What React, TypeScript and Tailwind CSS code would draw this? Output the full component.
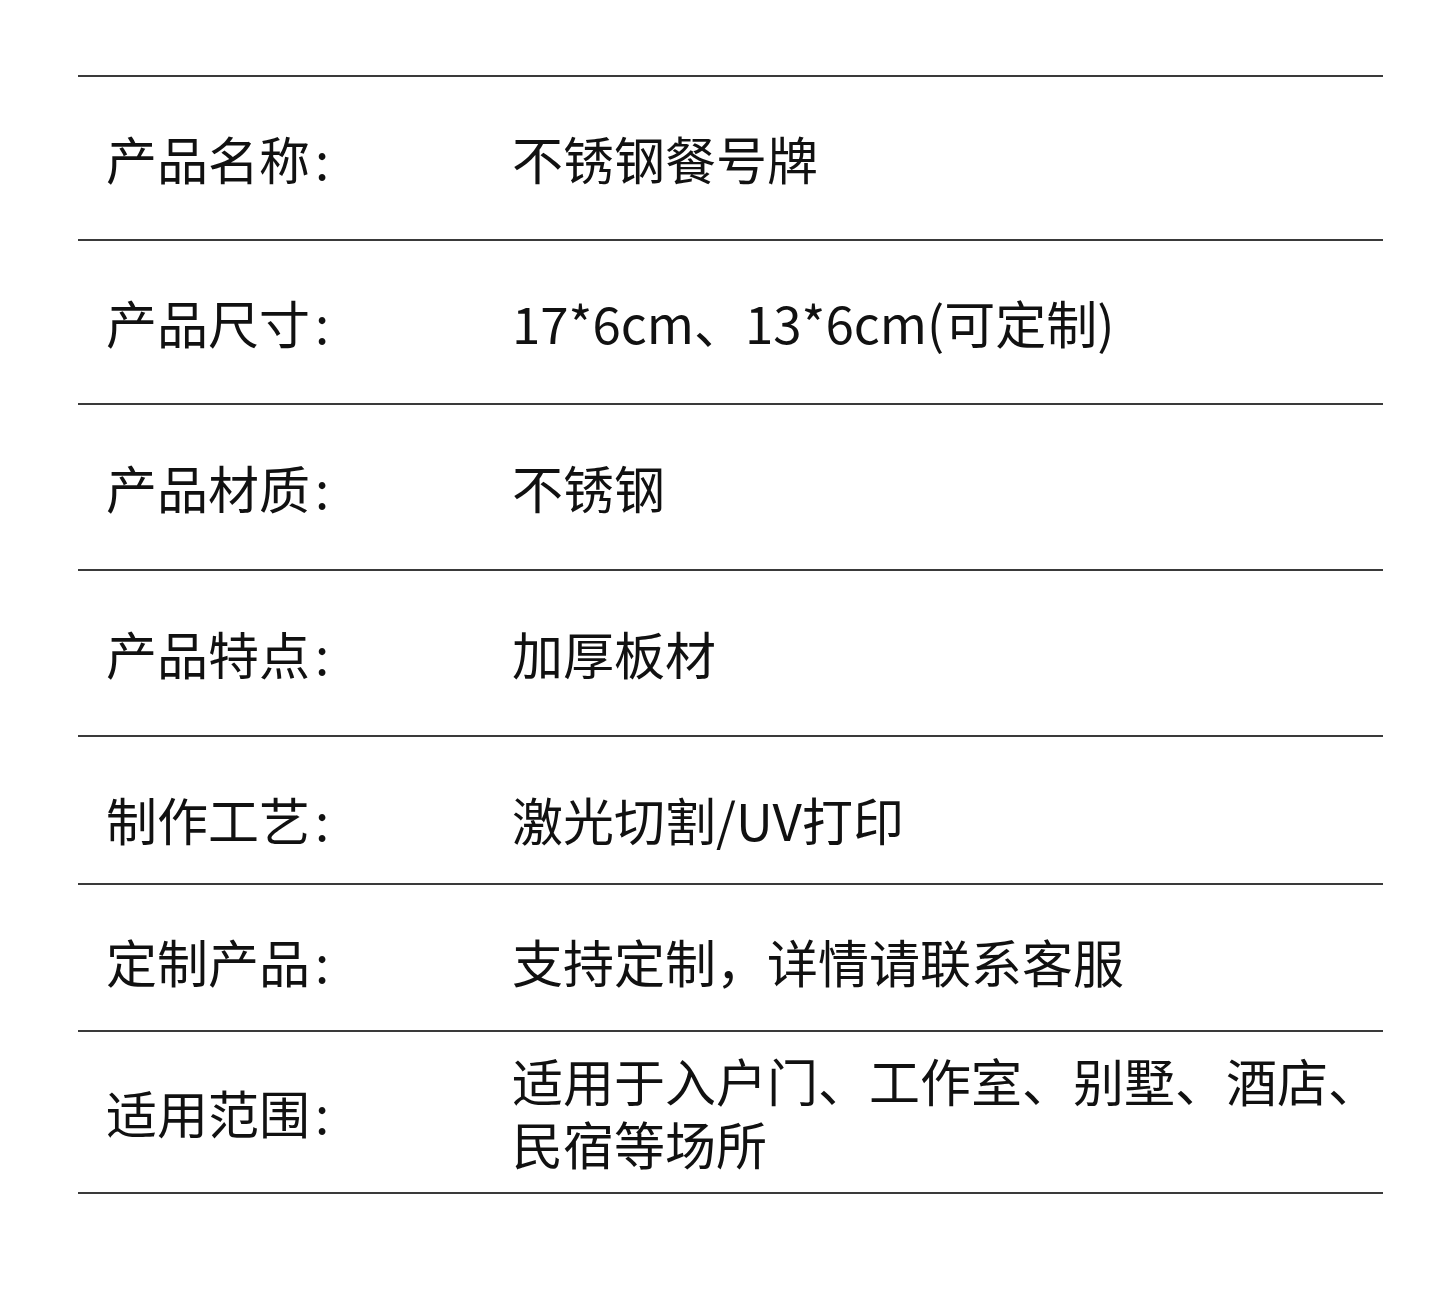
import React from "react";

const rows: { label: string; value: string; h: string; pt: string }[] = [
  { label: "产品名称", value: "不锈钢餐号牌", h: "h-[164px]", pt: "pt-0" },
  { label: "产品尺寸", value: "17*6cm、13*6cm(可定制)", h: "h-[164px]", pt: "pt-0" },
  { label: "产品材质", value: "不锈钢", h: "h-[166px]", pt: "pt-0" },
  { label: "产品特点", value: "加厚板材", h: "h-[166px]", pt: "pt-0" },
  { label: "制作工艺", value: "激光切割/UV打印", h: "h-[148px]", pt: "pt-[18px]" },
  { label: "定制产品", value: "支持定制，详情请联系客服", h: "h-[147px]", pt: "pt-[8px]" },
  { label: "适用范围", value: "适用于入户门、工作室、别墅、酒店、民宿等场所", h: "h-[162px]", pt: "pt-0" },
];

export default function App() {
  return (
    <div
      className="w-[1440px] h-[1314px] bg-white pt-[75px] pl-[78px]"
      style={{ fontFamily: '"Noto Sans CJK SC", "Noto Sans", sans-serif' }}
    >
      <div className="w-[1305px] border-t-2 border-[#3a3a3a]">
        {rows.map((r) => (
          <div
            key={r.label}
            className={`${r.h} ${r.pt} box-border border-b-2 border-[#3a3a3a] flex items-center text-[51px] text-[#111] leading-[63px]`}
          >
            <div className="w-[434px] shrink-0 pl-[28px]">
              {r.label}
              <span className="ml-[5px]">:</span>
            </div>
            <div className="w-[880px]">{r.value}</div>
          </div>
        ))}
      </div>
    </div>
  );
}
